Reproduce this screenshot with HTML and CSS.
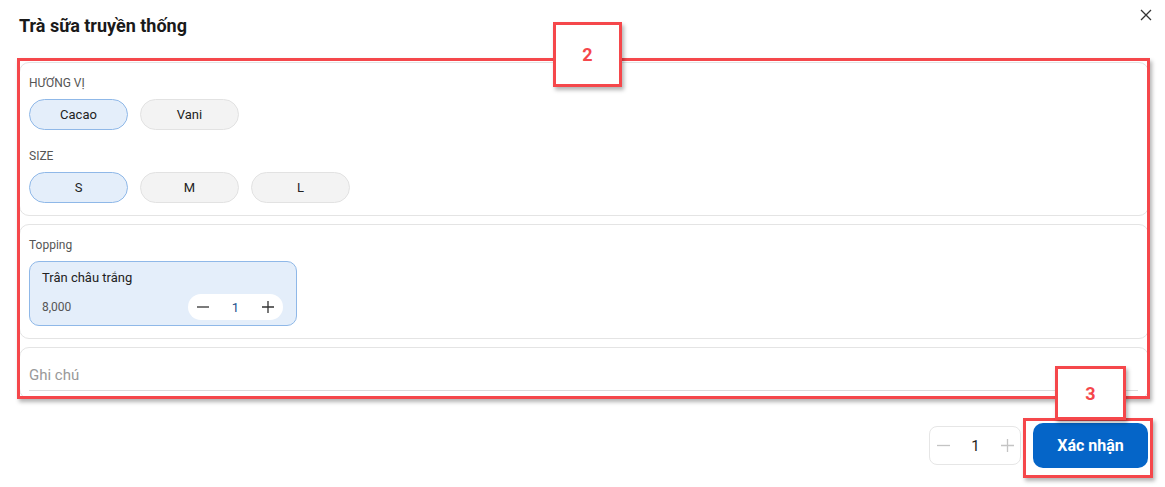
FILE: index.html
```html
<!DOCTYPE html>
<html lang="vi">
<head>
    <meta charset="UTF-8">
    <meta name="viewport" content="width=device-width, initial-scale=1.0">
    <title>Trà sữa truyền thống</title>
    <link rel="stylesheet" href="styles.css">
</head>
<body>
    <div class="modal">
        <div class="modal-header">
            <h2>Trà sữa truyền thống</h2>
            <button class="close-btn" aria-label="Đóng">
                <svg width="12" height="12" viewBox="0 0 12 12"><path d="M1 1 L11 11 M11 1 L1 11" stroke="#333" stroke-width="1.3" fill="none"/></svg>
            </button>
        </div>

        <div class="modal-body">
            <div class="card">
                <div class="group">
                    <div class="group-label">HƯƠNG VỊ</div>
                    <div class="chips">
                        <button class="chip active">Cacao</button>
                        <button class="chip">Vani</button>
                    </div>
                </div>
                <div class="group">
                    <div class="group-label">SIZE</div>
                    <div class="chips">
                        <button class="chip active">S</button>
                        <button class="chip">M</button>
                        <button class="chip">L</button>
                    </div>
                </div>
            </div>

            <div class="card">
                <div class="group-label topping-label">Topping</div>
                <div class="topping">
                    <div class="topping-name">Trân châu trắng</div>
                    <div class="topping-row">
                        <span class="topping-price">8,000</span>
                        <div class="mini-stepper">
                            <button class="step-btn">
                                <svg width="12" height="12" viewBox="0 0 12 12"><path d="M0 6 H12" stroke="#333" stroke-width="1.3"/></svg>
                            </button>
                            <span class="mini-qty">1</span>
                            <button class="step-btn">
                                <svg width="12" height="12" viewBox="0 0 12 12"><path d="M0 6 H12 M6 0 V12" stroke="#333" stroke-width="1.3"/></svg>
                            </button>
                        </div>
                    </div>
                </div>
            </div>

            <div class="card note-card">
                <input class="note-input" type="text" placeholder="Ghi chú">
            </div>
        </div>

        <div class="modal-footer">
            <div class="stepper">
                <button class="step-btn">
                    <svg width="13" height="13" viewBox="0 0 13 13"><path d="M0 6.5 H13" stroke="#c4c4c4" stroke-width="1.3"/></svg>
                </button>
                <span class="qty">1</span>
                <button class="step-btn">
                    <svg width="13" height="13" viewBox="0 0 13 13"><path d="M0 6.5 H13 M6.5 0 V13" stroke="#c4c4c4" stroke-width="1.3"/></svg>
                </button>
            </div>
            <button class="confirm-btn">Xác nhận</button>
        </div>
    </div>

    <!-- Markierungen -->
    <div class="mark mark-body"></div>
    <div class="mark-label label-2">2</div>
    <div class="mark mark-confirm"></div>
    <div class="mark-label label-3">3</div>
</body>
</html>
```

FILE: styles.css
```css
* {
    margin: 0;
    padding: 0;
    box-sizing: border-box;
}

body {
    font-family: Roboto, "Liberation Sans", Arial, sans-serif;
    background-color: #fff;
    color: #222;
}

button {
    font-family: inherit;
    border: none;
    background: none;
    cursor: pointer;
}

.modal {
    padding: 16px 16px 16px 19px;
}

.modal-header {
    display: flex;
    justify-content: space-between;
    align-items: flex-start;
    margin-bottom: 26px;
}

.modal-header h2 {
    font-size: 18px;
    line-height: 20px;
    font-weight: 700;
    color: #1a1a1a;
}

.close-btn {
    margin-top: -8px;
    margin-right: -4px;
    width: 14px;
    height: 14px;
    display: flex;
    align-items: center;
    justify-content: center;
}

.modal-body {
    display: flex;
    flex-direction: column;
    gap: 8px;
}

.card {
    border: 1px solid #e4e4e4;
    border-radius: 10px;
    padding: 12px 9px;
    display: flex;
    flex-direction: column;
    gap: 18px;
}

.group-label {
    font-size: 12px;
    line-height: 16px;
    color: #555;
    margin-bottom: 8px;
}

.topping-label {
    margin-bottom: -10px;
}

.chips {
    display: flex;
    gap: 12px;
}

.chip {
    width: 99px;
    height: 31px;
    border-radius: 16px;
    border: 1px solid #e2e2e2;
    background-color: #f3f3f3;
    font-size: 13px;
    color: #222;
}

.chip.active {
    background-color: #e4eefa;
    border-color: #8fb8e8;
}

.topping {
    width: 268px;
    height: 65px;
    border: 1px solid #8fb8e8;
    border-radius: 10px;
    background-color: #e4eefa;
    padding: 8px 13px 5px 12px;
    display: flex;
    flex-direction: column;
    justify-content: space-between;
}

.topping-name {
    font-size: 13px;
    line-height: 16px;
    color: #222;
}

.topping-row {
    display: flex;
    justify-content: space-between;
    align-items: center;
}

.topping-price {
    font-size: 12px;
    color: #555;
}

.mini-stepper {
    width: 95px;
    height: 26px;
    background-color: #fff;
    border-radius: 13px;
    display: flex;
    align-items: center;
    justify-content: space-between;
    padding: 0 9px;
}

.step-btn {
    display: flex;
    align-items: center;
    justify-content: center;
}

.mini-qty {
    font-size: 13px;
    color: #1d4f8c;
}

.note-card {
    padding: 11px 10px 7px 9px;
}

.note-input {
    width: 100%;
    height: 32px;
    border: none;
    border-bottom: 1px solid #dcdcdc;
    font-family: inherit;
    font-size: 15px;
    color: #222;
    outline: none;
}

.note-input::placeholder {
    color: #999;
}

.modal-footer {
    display: flex;
    justify-content: flex-end;
    align-items: center;
    gap: 12px;
    margin-top: 24px;
    padding-right: 1px;
}

.stepper {
    width: 92px;
    height: 39px;
    border: 1px solid #e6e6e6;
    border-radius: 8px;
    display: flex;
    align-items: center;
    justify-content: space-between;
    padding: 0 6px 0 7px;
}

.qty {
    font-size: 15px;
    color: #222;
}

.confirm-btn {
    width: 115px;
    height: 45px;
    border-radius: 10px;
    background-color: #0565c8;
    color: #fff;
    font-size: 16px;
    font-weight: 700;
}

/* Markierungen über dem Inhalt */
.mark {
    position: absolute;
    border: 3px solid #f5474b;
    box-shadow: 2px 3px 4px rgba(0, 0, 0, 0.3);
}

.mark-body {
    left: 17px;
    top: 58px;
    width: 1133px;
    height: 341px;
}

.mark-confirm {
    left: 1023px;
    top: 418px;
    width: 130px;
    height: 60px;
}

.mark-label {
    position: absolute;
    background-color: #fff;
    border: 3px solid #f5474b;
    box-shadow: 2px 3px 4px rgba(0, 0, 0, 0.3);
    color: #f5474b;
    font-size: 18px;
    font-weight: 700;
    display: flex;
    align-items: center;
    justify-content: center;
}

.label-2 {
    left: 553px;
    top: 22px;
    width: 69px;
    height: 65px;
}

.label-3 {
    left: 1055px;
    top: 366px;
    width: 71px;
    height: 54px;
}
```
